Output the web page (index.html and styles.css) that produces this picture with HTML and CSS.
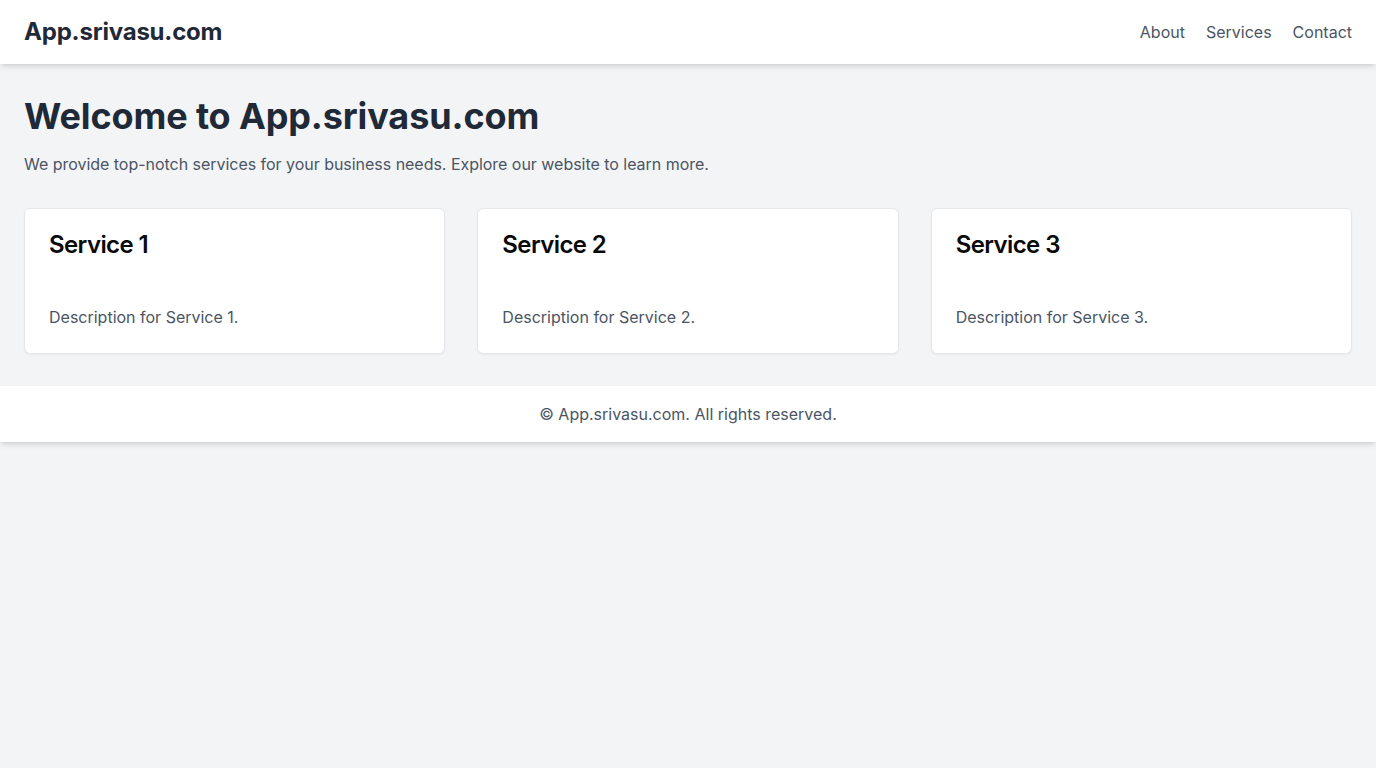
FILE: index.html
```html
<!DOCTYPE html>
<html lang="en">
<head>
<meta charset="utf-8">
<title>App.srivasu.com</title>
<link rel="stylesheet" href="styles.css">
</head>
<body>
<header class="site-header">
  <div class="logo">App.srivasu.com</div>
  <nav class="nav">
    <a href="#">About</a>
    <a href="#">Services</a>
    <a href="#">Contact</a>
  </nav>
</header>
<main class="main">
  <h1 class="title">Welcome to App.srivasu.com</h1>
  <p class="lead">We provide top-notch services for your business needs. Explore our website to learn more.</p>
  <div class="cards">
    <div class="card">
      <h2 class="card-title">Service 1</h2>
      <p class="card-desc">Description for Service 1.</p>
    </div>
    <div class="card">
      <h2 class="card-title">Service 2</h2>
      <p class="card-desc">Description for Service 2.</p>
    </div>
    <div class="card">
      <h2 class="card-title">Service 3</h2>
      <p class="card-desc">Description for Service 3.</p>
    </div>
  </div>
</main>
<footer class="site-footer">© App.srivasu.com. All rights reserved.</footer>
</body>
</html>
```
FILE: styles.css
```css
* { box-sizing: border-box; }
html, body { margin: 0; padding: 0; }
body {
  background: #f3f4f6;
  font-family: Inter, "Liberation Sans", sans-serif;
  color: #1f2937;
  font-size: 16px;
  line-height: 24px;
  min-height: 768px;
}
.site-header {
  background: #fff;
  display: flex;
  justify-content: space-between;
  align-items: center;
  padding: 16px 24px;
  box-shadow: 0 4px 6px -1px rgba(0,0,0,0.1), 0 2px 4px -2px rgba(0,0,0,0.1);
  position: relative;
}
.logo {
  font-size: 24px;
  line-height: 32px;
  font-weight: 700;
  color: #1f2937;
  letter-spacing: -0.2px;
}
.nav { display: flex; gap: 21px; }
.nav a {
  color: #4b5563;
  text-decoration: none;
  font-size: 16px;
  line-height: 24px;
}
.main { padding: 32px 24px; }
.title {
  margin: 0 0 16px;
  font-size: 36px;
  line-height: 40px;
  font-weight: 700;
  color: #1f2937;
  letter-spacing: -0.12px;
}
.lead { margin: 0 0 32px; color: #4b5563; letter-spacing: -0.03px; }
.cards {
  display: grid;
  grid-template-columns: repeat(3, 1fr);
  gap: 32px;
}
.card {
  background: #fff;
  border: 1px solid #e5e7eb;
  border-radius: 6px;
  box-shadow: 0 1px 2px 0 rgba(0,0,0,0.05);
  padding: 24px;
}
.card-title {
  margin: 0 0 48px;
  font-size: 24px;
  line-height: 24px;
  font-weight: 600;
  color: #0a0a0a;
  letter-spacing: -0.6px;
}
.card-desc { margin: 0; color: #4b5563; }
.site-footer {
  background: #fff;
  text-align: center;
  padding: 16px;
  color: #4b5563;
  box-shadow: 0 4px 6px -1px rgba(0,0,0,0.1), 0 2px 4px -2px rgba(0,0,0,0.1);
}
```
